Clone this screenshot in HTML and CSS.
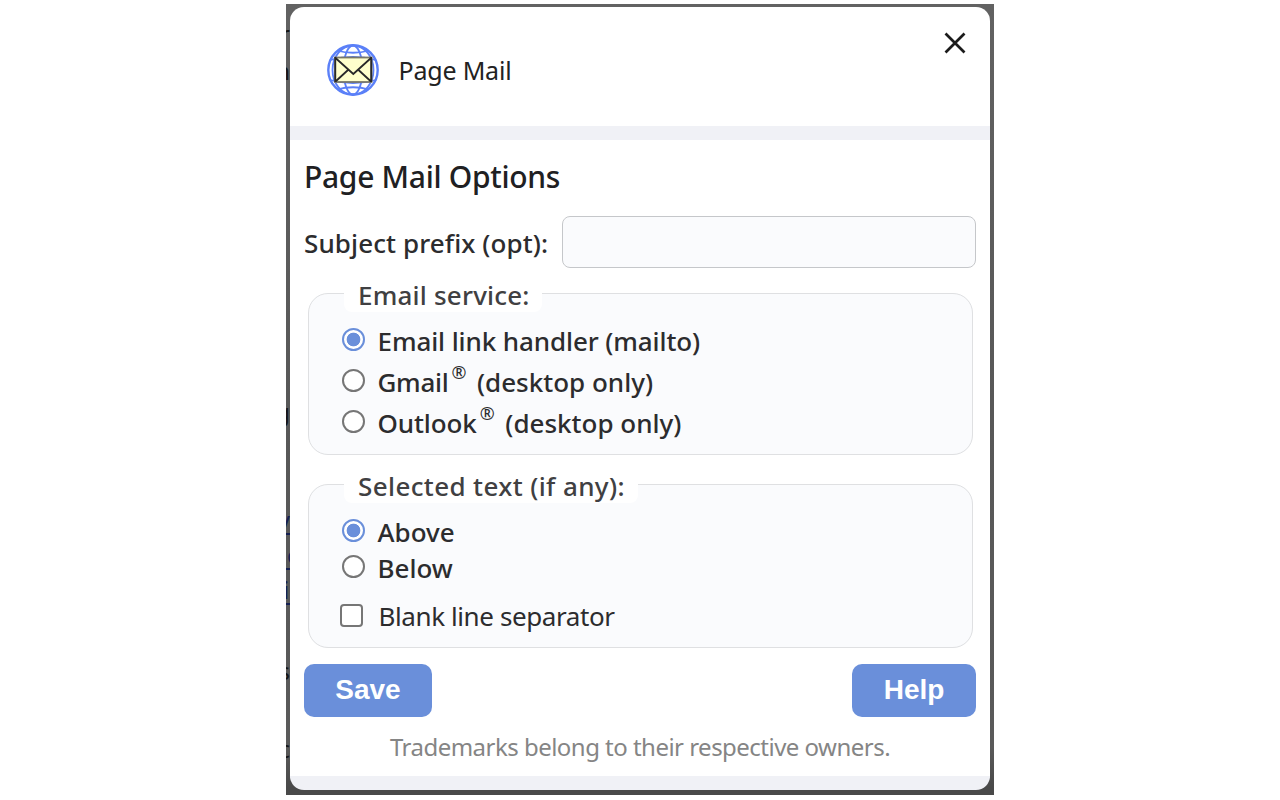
FILE: index.html
```
<!DOCTYPE html>
<html lang="en">
<head>
<meta charset="utf-8">
<title>Page Mail Options</title>
<link rel="stylesheet" href="styles.css">
</head>
<body>
<div class="backdrop">
  <span class="peek p1">r</span>
  <span class="peek p2">n</span>
  <span class="peek p3">g</span>
  <span class="peek link p4">y</span>
  <span class="peek link p5">e</span>
  <span class="peek link p6">ic</span>
  <span class="peek p7">s</span>
  <span class="peek p8">c</span>
  <main class="dialog">
    <header class="header">
      <svg class="logo" width="54" height="54" viewBox="0 0 54 54" fill="none">
        <g stroke="#5b80f8" stroke-width="1.8">
          <circle cx="27" cy="27" r="24.7" stroke-width="2.4"/>
          <ellipse cx="27" cy="27" rx="20.5" ry="24.5"/>
          <ellipse cx="27" cy="27" rx="9.5" ry="24.5"/>
          <path d="M11 7.500Q27 12 43 7.500M4 17Q27 11 50 17M4 37Q27 43 50 37M11 46.500Q27 42 43 46.500"/>
        </g>
        <rect x="9" y="14.500" width="36.500" height="24.500" fill="#ffffcc" stroke="#77776a" stroke-width="1.800"/>
        <path d="M9.500 15L27.300 31L45 15M9.500 38.500L22 27M45 38.500L32.500 27M9.300 14V39M45.200 14V39" stroke="#292929" stroke-width="1.800"/>
      </svg>
      <span class="brand">Page Mail</span>
      <svg class="close" width="22" height="22" viewBox="0 0 22 22"><path d="M1.500 1.500L20.500 20.500M20.500 1.500L1.500 20.500" stroke="#1b1b1b" stroke-width="2.700"/></svg>
    </header>
    <section class="body">
      <h1 class="title">Page Mail Options</h1>
      <div class="prefix">
        <label class="prefix-label" for="prefix">Subject prefix (opt):</label>
        <input class="prefix-input" id="prefix" type="text">
      </div>
      <fieldset class="group service">
        <legend class="legend">Email service:</legend>
        <label class="option"><input class="radio" type="radio" name="svc" checked><span class="text">Email link handler (mailto)</span></label>
        <label class="option"><input class="radio" type="radio" name="svc"><span class="text gmail">Gmail</span><span class="reg">®</span><span class="only">(desktop only)</span></label>
        <label class="option"><input class="radio" type="radio" name="svc"><span class="text">Outlook</span><span class="reg">®</span><span class="only">(desktop only)</span></label>
      </fieldset>
      <fieldset class="group selection">
        <legend class="legend">Selected text (if any):</legend>
        <label class="option"><input class="radio" type="radio" name="pos" checked><span>Above</span></label>
        <label class="option"><input class="radio" type="radio" name="pos"><span>Below</span></label>
        <label class="option check"><input class="box" type="checkbox"><span>Blank line separator</span></label>
      </fieldset>
      <div class="actions">
        <button class="button save">Save</button>
        <button class="button help">Help</button>
      </div>
      <p class="note">Trademarks belong to their respective owners.</p>
    </section>
  </main>
</div>
</body>
</html>
```
FILE: styles.css
```
* { box-sizing: border-box; }
body {
  margin: 0;
  padding-top: 4px;
  background: #fff;
  font-family: "Noto Sans", "Open Sans", sans-serif;
  color: #2c2c2e;
}
.backdrop {
  position: relative;
  overflow: hidden;
  width: 708px;
  height: 791px;
  margin: 0 auto;
  padding: 3px 4px 5px;
  background: linear-gradient(#626262, #585858 50%, #5a5a5a 94%, #494949 99%);
}
.peek {
  position: absolute;
  right: 704px;
  color: #151515;
  font-size: 24px;
  line-height: 30px;
}
.link { color: #152052; border-bottom: 2px solid #152052; line-height: 27px; }
.p1 { top: 15px; }
.p2 { top: 52px; }
.p3 { top: 393px; }
.p4 { top: 502px; }
.p5 { top: 537px; left: 0; right: auto; padding-left: 1px; }
.p6 { top: 572px; left: -3px; right: auto; }
.p7 { top: 652px; }
.p8 { top: 730px; }
.dialog {
  position: relative;
  height: 783px;
  border-radius: 14px;
  overflow: hidden;
  background: #fff;
  border-bottom: 14px solid #f0f1f6;
}
.header {
  display: flex;
  align-items: center;
  height: 133px;
  padding: 7px 24px 0 36px;
  border-bottom: 14px solid #f0f1f6;
}
.brand {
  margin-left: 18.5px;
  font-size: 25px;
  line-height: 34px;
  letter-spacing: -.2px;
  color: #222;
}
.close { margin: 0 0 54px auto; }
.body { padding: 18px 14px 0; }
.title {
  margin: 0;
  padding-top: 1px;
  font-size: 30px;
  line-height: 36px;
  font-weight: 500;
  letter-spacing: -.3px;
  color: #202022;
}
.prefix { display: flex; align-items: center; height: 52px; margin-top: 21px; }
.prefix-label {
  width: 258px;
  padding-top: 2px;
  font-size: 26px;
  line-height: 36px;
  font-weight: 500;
  letter-spacing: .1px;
  white-space: nowrap;
}
.prefix-input {
  width: 414px;
  height: 52px;
  border: 1px solid #c5c7ca;
  border-radius: 8px;
  background: #fafbfd;
}
.group {
  min-width: 0;
  margin: 0 3px 0 4px;
  padding: 0 0 0 33px;
  border: 1px solid #dfe0e2;
  border-radius: 20px;
  background: #fafbfd;
  font-size: 26px;
  font-weight: 500;
}
.service { height: 180px; margin-top: 7px; }
.selection { height: 182px; margin-top: 11px; }
.legend {
  height: 37px;
  margin-left: 2px;
  padding: 0 0 0 14px;
  border-radius: 8px;
  background: #fff;
  line-height: 40px;
  color: #404042;
  white-space: nowrap;
}
.service .legend { width: 198px; letter-spacing: .2px; }
.selection .legend { width: 294px; letter-spacing: .38px; }
.option { display: flex; align-items: center; height: 41px; line-height: 36px; white-space: nowrap; }
.service .option:first-of-type { margin-top: 8px; }
.selection .option { height: 36px; }
.selection .option:first-of-type { margin-top: 10px; }
.selection .option span { padding-top: 2px; }
.option.check { margin: 12px 0 0 -2px; font-weight: 400; letter-spacing: -.4px; }
.text { letter-spacing: -.1px; }
.gmail { letter-spacing: -.3px; }
.radio {
  appearance: none;
  flex: none;
  width: 23px;
  height: 23px;
  margin: 0 12.500px 2px 0;
  border: 2px solid #767676;
  border-radius: 50%;
  background: #fff;
}
.radio:checked {
  border: 2px solid #6a8fda;
  background: radial-gradient(circle, #6a8fda 6.5px, #fff 7.200px);
}
.box {
  appearance: none;
  flex: none;
  width: 23px;
  height: 23px;
  margin: 0 15.500px 0 0;
  border: 2px solid #767676;
  border-radius: 4px;
  background: #fff;
}
.reg { margin: -20px 10.500px 0 3px; font-size: 18px; font-weight: 400; }
.actions { display: flex; justify-content: space-between; margin-top: 16px; }
.button {
  height: 53px;
  padding: 0 0 2px;
  border: 0;
  border-radius: 10px;
  background: #6a8fda;
  color: #fff;
  font: bold 28px "Liberation Sans", sans-serif;
}
.save { width: 128px; }
.help { width: 124px; }
.note {
  margin: 13px 0 0;
  text-align: center;
  font-size: 24px;
  line-height: 34px;
  letter-spacing: -.52px;
  color: #858585;
  white-space: nowrap;
}
```
